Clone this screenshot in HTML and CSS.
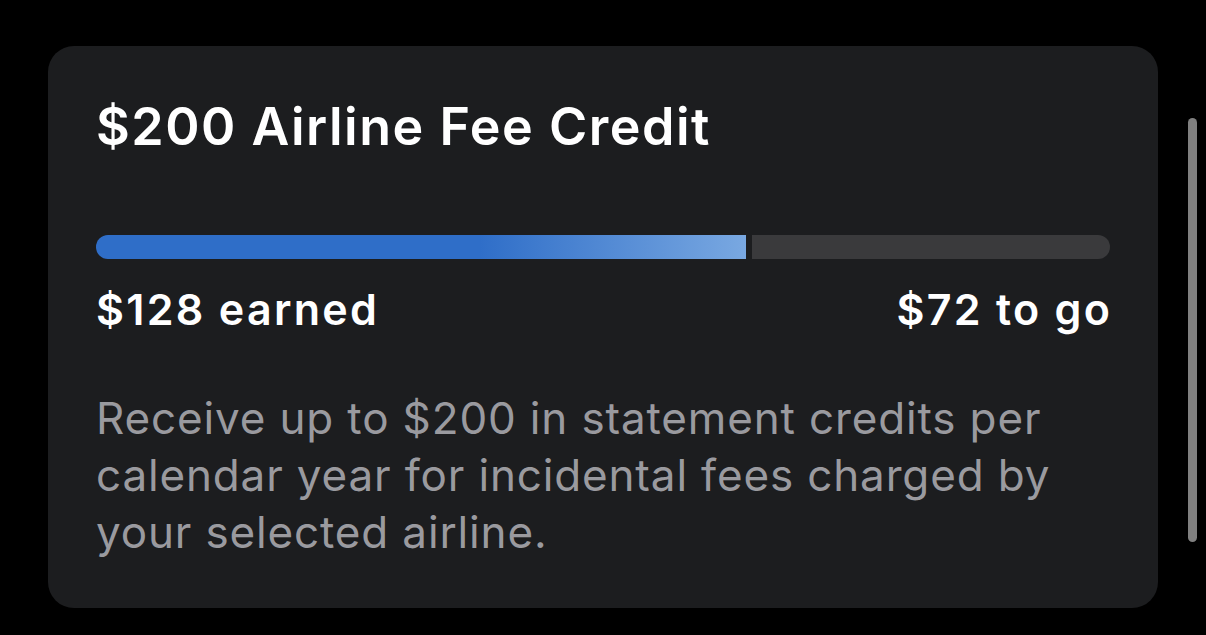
FILE: index.html
```html
<!DOCTYPE html>
<html lang="en">
<head>
<meta charset="utf-8">
<title>Airline Fee Credit</title>
<link rel="stylesheet" href="styles.css">
</head>
<body>
<main class="screen">
  <section class="card">
    <h1 class="title">$200 Airline Fee Credit</h1>
    <div class="progress">
      <div class="progress-fill" style="width: 64.1%"></div>
      <div class="progress-track"></div>
    </div>
    <div class="labels">
      <span class="label">$128 earned</span>
      <span class="label">$72 to go</span>
    </div>
    <p class="desc">Receive up to $200 in statement credits per calendar year for incidental fees charged by your selected airline.</p>
  </section>
  <div class="scroll-indicator"></div>
</main>
</body>
</html>
```
FILE: styles.css
```css
html, body {
  margin: 0;
  padding: 0;
  background: #000;
}
body {
  width: 1206px;
  height: 635px;
  overflow: hidden;
  font-family: Inter, "Noto Sans", sans-serif;
}
.screen {
  position: relative;
  width: 1206px;
  height: 635px;
  padding: 46px 48px 0 48px;
  box-sizing: border-box;
}
.card {
  width: 1110px;
  height: 562px;
  box-sizing: border-box;
  background: #1c1d1f;
  border-radius: 26px;
  padding: 50px 48px 0 48px;
  display: flex;
  flex-direction: column;
}
.title {
  margin: 0;
  font-size: 52px;
  line-height: 62px;
  font-weight: 600;
  color: #fff;
  letter-spacing: 1.5px;
}
.progress {
  margin-top: 77px;
  height: 24px;
  display: flex;
  gap: 6px;
}
.progress-fill {
  height: 100%;
  border-radius: 12px 0 0 12px;
  background: linear-gradient(90deg, #2f6ec8 0%, #2f6ec8 59%, #79a8e1 100%);
}
.progress-track {
  flex: 1;
  height: 100%;
  border-radius: 0 12px 12px 0;
  background: #3a3a3c;
}
.labels {
  margin-top: 25px;
  display: flex;
  justify-content: space-between;
}
.label {
  font-size: 43px;
  line-height: 50px;
  font-weight: 600;
  color: #fff;
  letter-spacing: 2.3px;
}
.label:last-child {
  margin-right: -2.3px;
}
.desc {
  margin: 56px 0 0 0;
  font-size: 44px;
  line-height: 57px;
  font-weight: 400;
  color: #9a9a9f;
  letter-spacing: 0.85px;
}
.scroll-indicator {
  position: absolute;
  left: 1188px;
  top: 118px;
  width: 9px;
  height: 424px;
  border-radius: 5px;
  background: #808080;
}
```
